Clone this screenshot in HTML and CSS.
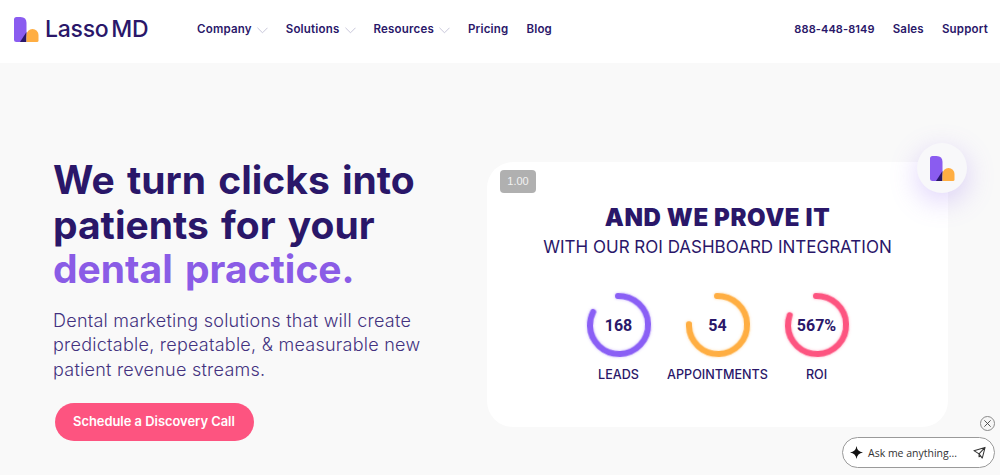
FILE: index.html
```html
<!DOCTYPE html>
<html lang="en">
<head>
    <meta charset="UTF-8">
    <title>Lasso MD</title>
    <link rel="stylesheet" href="styles.css">
</head>
<body>
    <svg class="defs" width="0" height="0">
        <symbol id="mark" viewBox="0 0 25 25">
            <path d="M2.500 0H6.500Q12.500 0 12.500 6V19L9 25H2.500Q0 25 0 22.500V2.500Q0 0 2.500 0Z" fill="#8a5cf0"/>
            <path d="M6 25L12.500 15V25Z" fill="#2a1769"/>
            <path d="M12.500 25V18a6 6 0 0 1 12 0V23.500Q24.500 25 23 25Z" fill="#ffae42"/>
        </symbol>
    </svg>

    <!-- top nav -->
    <header class="topbar">
        <a href="#" class="brand">
            <svg class="brand-mark"><use href="#mark"/></svg>
            <span class="brand-name">Lasso MD</span>
        </a>
        <nav class="nav-main">
            <a href="#" class="nav-item">Company <svg class="chev" viewBox="0 0 12 7"><path d="M.5.5L6 6 11.500.5"/></svg></a>
            <a href="#" class="nav-item">Solutions <svg class="chev" viewBox="0 0 12 7"><path d="M.5.5L6 6 11.500.5"/></svg></a>
            <a href="#" class="nav-item">Resources <svg class="chev" viewBox="0 0 12 7"><path d="M.5.5L6 6 11.500.5"/></svg></a>
            <a href="#" class="nav-item">Pricing</a>
            <a href="#" class="nav-item">Blog</a>
        </nav>
        <nav class="nav-side">
            <a href="#" class="nav-item nav-phone">888-448-8149</a>
            <a href="#" class="nav-item">Sales</a>
            <a href="#" class="nav-item">Support</a>
        </nav>
    </header>

    <!-- hero -->
    <main class="hero">
        <section class="hero-copy">
            <h1>We turn clicks into patients for your <span class="accent">dental practice.</span></h1>
            <p>Dental marketing solutions that will create predictable, repeatable, &amp; measurable new patient revenue streams.</p>
            <a href="#" class="cta">Schedule a Discovery Call</a>
        </section>

        <section class="card">
            <span class="speed">1.00</span>
            <div class="float-logo"><svg class="brand-mark"><use href="#mark"/></svg></div>
            <h2>AND WE PROVE IT</h2>
            <h3>WITH OUR ROI DASHBOARD INTEGRATION</h3>
            <div class="stats">
                <div class="stat">
                    <div class="ring ring-purple">
                        <svg viewBox="0 0 66 66"><circle cx="33" cy="33" r="29" pathLength="100" stroke-dasharray="83 100"/></svg>
                        <strong>168</strong>
                    </div>
                    <span>LEADS</span>
                </div>
                <div class="stat">
                    <div class="ring ring-orange">
                        <svg viewBox="0 0 66 66"><circle cx="33" cy="33" r="29" pathLength="100" stroke-dasharray="76 100"/></svg>
                        <strong>54</strong>
                    </div>
                    <span>APPOINTMENTS</span>
                </div>
                <div class="stat">
                    <div class="ring ring-pink">
                        <svg viewBox="0 0 66 66"><circle cx="33" cy="33" r="29" pathLength="100" stroke-dasharray="81 100"/></svg>
                        <strong>567%</strong>
                    </div>
                    <span>ROI</span>
                </div>
            </div>
        </section>
    </main>

    <!-- chat widget -->
    <button class="chat-close" aria-label="Close">
        <svg viewBox="0 0 10 10"><path d="M1.500 1.500L8.500 8.500M8.500 1.500L1.500 8.500"/></svg>
    </button>
    <div class="chat">
        <svg class="chat-star" viewBox="0 0 14 14"><path d="M7 0Q7.800 6.200 14 7 7.800 7.800 7 14 6.200 7.800 0 7 6.200 6.200 7 0Z"/></svg>
        <span class="chat-text">Ask me anything...</span>
        <svg class="chat-send" viewBox="0 0 14 14"><path d="M1 5L13 1.500 10 13 6.500 8.500ZM6.500 8.500L13 1.500M6.500 8.500L6.500 11.500 8.200 10.700"/></svg>
    </div>
</body>
</html>
```

FILE: styles.css
```css
* {
    margin: 0;
    padding: 0;
    box-sizing: border-box;
}

html, body {
    height: 475px;
    overflow: hidden;
}

body {
    position: relative;
    background: #f9f9f9;
    color: #2a1769;
    font-family: Inter, "Open Sans", sans-serif;
}

a {
    color: inherit;
    text-decoration: none;
}

.defs {
    position: absolute;
}

/* top nav */
.topbar {
    display: flex;
    align-items: center;
    height: 63px;
    padding: 0 12px 5px 14px;
    background: #fff;
}

.brand {
    display: flex;
    align-items: center;
    gap: 6px;
    width: 183px;
}

.brand-mark {
    width: 25px;
    height: 25px;
}

.brand-name {
    font-size: 23px;
    font-weight: 500;
    letter-spacing: -0.25px;
    word-spacing: -3px;
}

.nav-main,
.nav-side {
    display: flex;
    align-items: center;
}

.nav-main {
    gap: 18px;
}

.nav-side {
    gap: 18px;
    margin-left: auto;
}

.nav-item {
    display: flex;
    align-items: center;
    gap: 5px;
    font-size: 11.500px;
    font-weight: 600;
    letter-spacing: 0.2px;
    white-space: nowrap;
}

.nav-phone {
    font-size: 11px;
    letter-spacing: 0.1px;
}

.chev {
    width: 11px;
    height: 7px;
    margin-top: 2px;
    fill: none;
    stroke: #c3c1d6;
}

/* hero */
.hero {
    display: flex;
    align-items: flex-start;
    padding: 95px 0 0 53px;
}

.hero-copy {
    flex: 0 0 434px;
}

h1 {
    width: 375px;
    font-size: 39px;
    font-weight: 700;
    line-height: 44.500px;
    word-spacing: 3px;
}

.accent {
    color: #8a5ce6;
}

.hero-copy p {
    width: 380px;
    margin-top: 17px;
    color: #43327f;
    font-size: 18px;
    font-weight: 300;
    letter-spacing: 0.25px;
    line-height: 24.500px;
}

.cta {
    display: inline-block;
    margin: 21px 0 0 2px;
    padding: 0 19px 0 18px;
    border-radius: 19px;
    background: #fd5480;
    color: #fff;
    font-size: 12.900px;
    font-weight: 600;
    line-height: 38px;
}

.card {
    position: relative;
    width: 461px;
    height: 265px;
    margin-top: 4px;
    padding-top: 44px;
    border-radius: 26px;
    background: #fff;
    text-align: center;
}

.speed {
    position: absolute;
    top: 8px;
    left: 13px;
    width: 36px;
    height: 23px;
    border-radius: 4px;
    background: #b0b0b0;
    color: #f2f2f2;
    font-family: "Liberation Sans", sans-serif;
    font-size: 11px;
    line-height: 23px;
}

.float-logo {
    position: absolute;
    top: -19px;
    right: -19px;
    display: flex;
    align-items: center;
    justify-content: center;
    width: 50px;
    height: 50px;
    border-radius: 50%;
    background: #f8f8fa;
    box-shadow: 0 8px 28px rgba(138, 92, 240, 0.28);
}

h2 {
    font-size: 24px;
    font-weight: 900;
    letter-spacing: 0.6px;
    line-height: 24px;
}

h3 {
    margin-top: 6px;
    font-size: 17px;
    font-weight: 400;
    line-height: 23px;
}

.stats {
    display: grid;
    grid-template-columns: repeat(3, 99px);
    justify-content: center;
    margin-top: 33px;
}

.stat {
    display: flex;
    flex-direction: column;
    align-items: center;
    gap: 9px;
    font-size: 12.600px;
    font-weight: 500;
    white-space: nowrap;
}

.ring {
    position: relative;
    display: flex;
    align-items: center;
    justify-content: center;
    width: 66px;
    height: 66px;
}

.ring svg {
    position: absolute;
    inset: 0;
    overflow: visible;
    transform: rotate(-92deg);
}

.ring circle {
    fill: none;
    stroke-width: 6;
    stroke-linecap: round;
}

.ring strong {
    font-family: Roboto, sans-serif;
    font-size: 16px;
    font-weight: 700;
}

.ring-purple circle {
    stroke: #8a5ff5;
    filter: drop-shadow(0 0 1.500px rgba(138, 95, 245, 0.4));
}

.ring-orange circle {
    stroke: #ffae42;
    filter: drop-shadow(0 0 1.500px rgba(255, 174, 66, 0.4));
}

.ring-pink circle {
    stroke: #fd5480;
    filter: drop-shadow(0 0 1.500px rgba(253, 84, 128, 0.4));
}

/* chat widget */
.chat-close {
    position: absolute;
    top: 416px;
    left: 980px;
    display: flex;
    align-items: center;
    justify-content: center;
    width: 15px;
    height: 15px;
    border: 1px solid #8a8a8a;
    border-radius: 50%;
    background: #f6f6f6;
}

.chat-close svg {
    width: 9px;
    height: 9px;
    fill: none;
    stroke: #444;
}

.chat {
    position: absolute;
    top: 437px;
    left: 842px;
    display: flex;
    align-items: center;
    width: 153px;
    height: 31px;
    padding: 0 8px 0 7px;
    border: 1px solid #9a9a9a;
    border-radius: 16px;
    background: #fff;
}

.chat-star {
    width: 13px;
    height: 13px;
    fill: #111;
}

.chat-text {
    margin-left: 5px;
    color: #333;
    font-family: "Open Sans", sans-serif;
    font-size: 10.500px;
}

.chat-send {
    width: 13px;
    height: 13px;
    margin-left: auto;
    fill: none;
    stroke: #333;
    stroke-width: 1.100;
    stroke-linejoin: round;
}
```
